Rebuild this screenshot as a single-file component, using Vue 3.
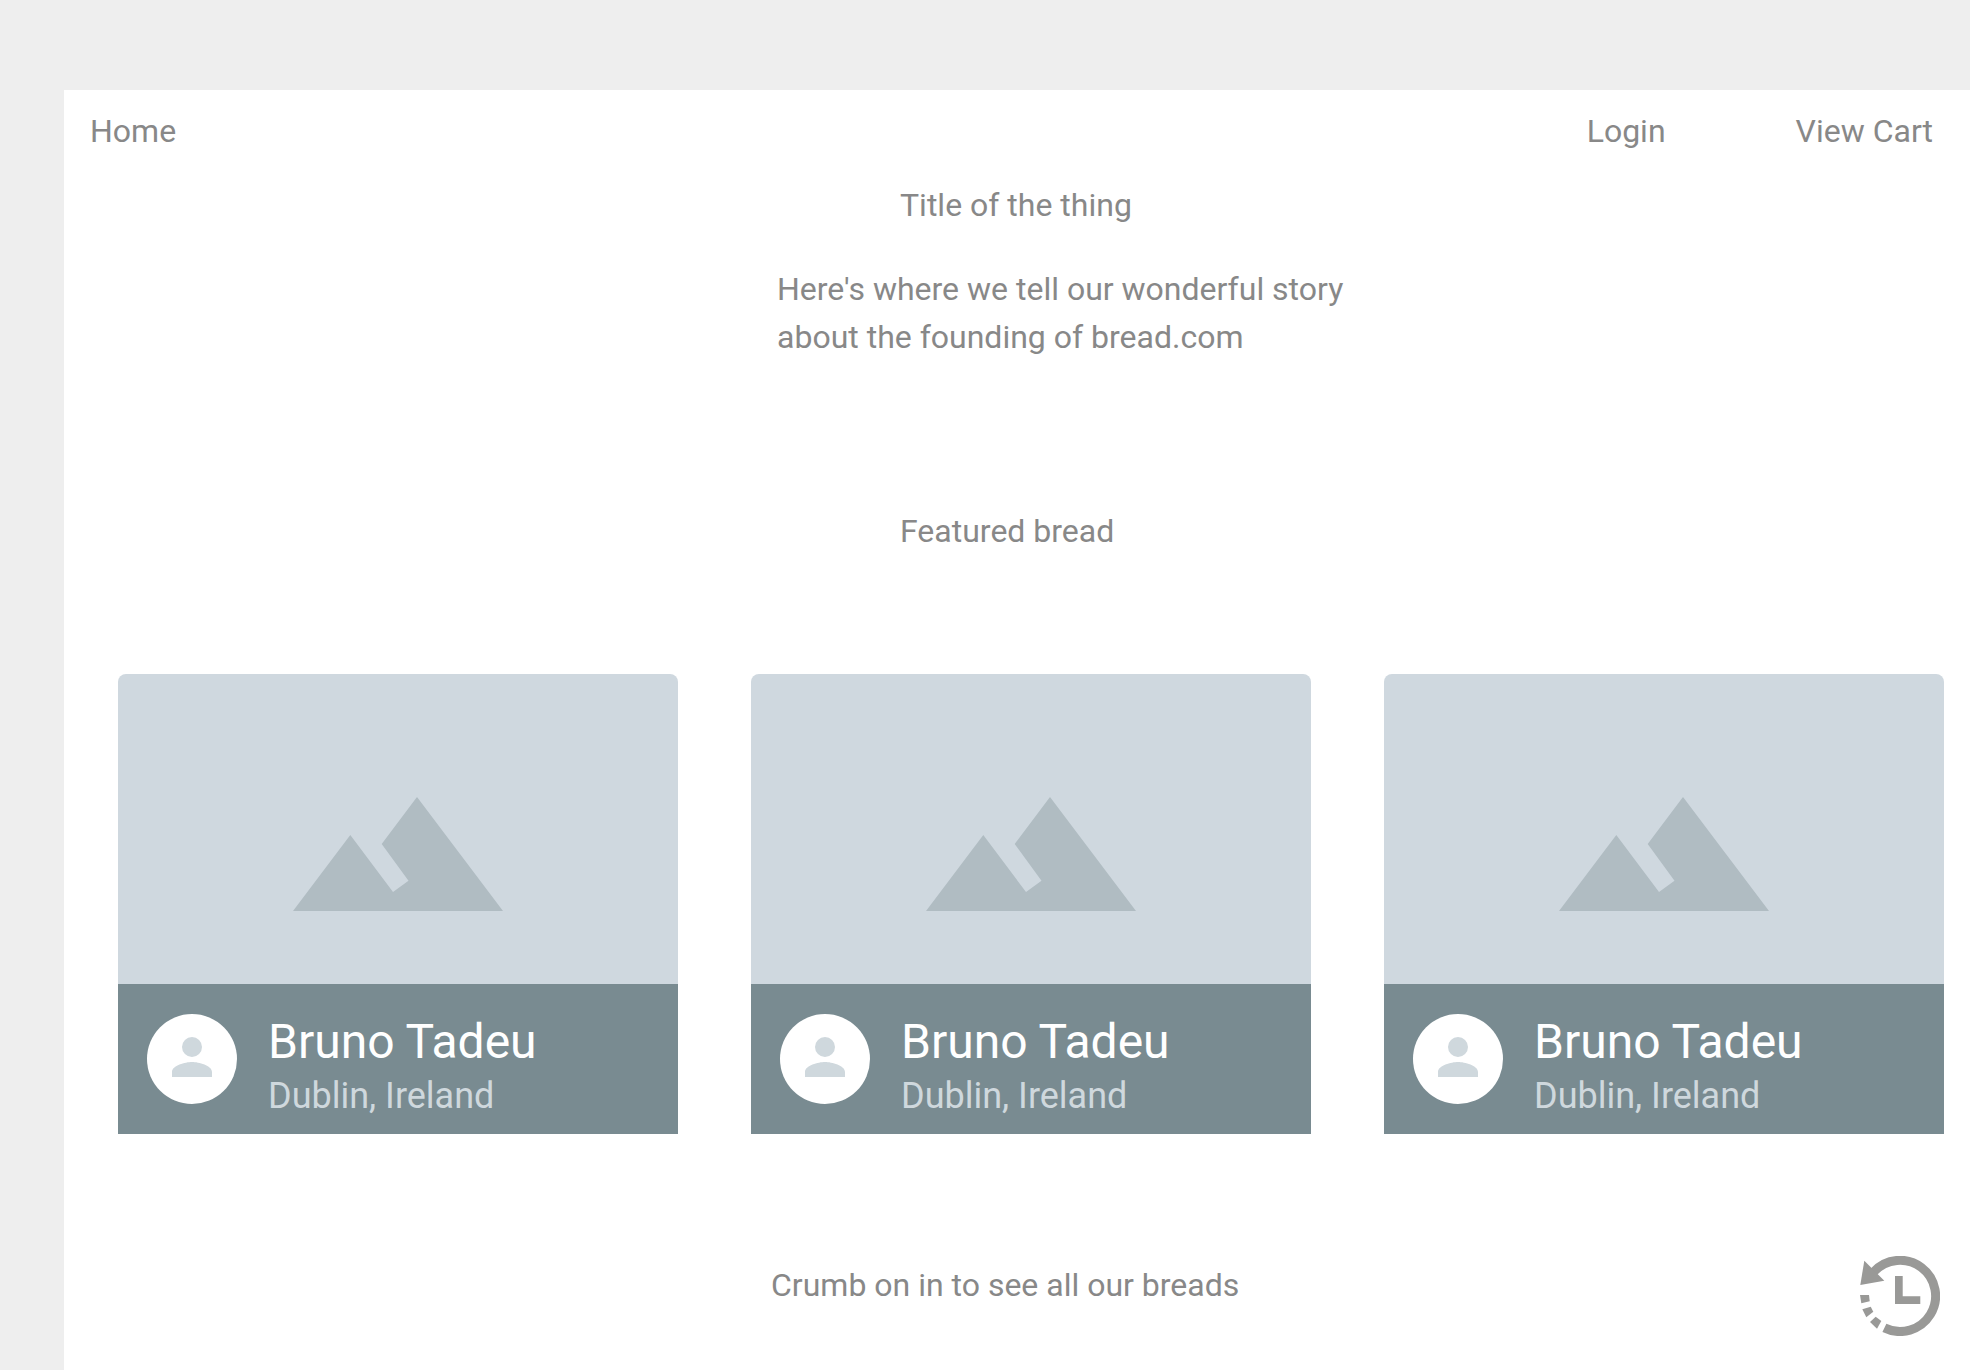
<script setup>
const cards = [
  { id: 1, name: 'Bruno Tadeu', place: 'Dublin, Ireland' },
  { id: 2, name: 'Bruno Tadeu', place: 'Dublin, Ireland' },
  { id: 3, name: 'Bruno Tadeu', place: 'Dublin, Ireland' },
]
</script>

<template>
  <div class="canvas">
    <div class="page">
      <nav class="nav" aria-label="Main">
        <a class="home" href="#">Home</a>
        <a href="#login">Login</a>
        <a href="#cart">View Cart</a>
      </nav>

      <main>
        <h1 class="title">Title of the thing</h1>
        <p class="story">Here's where we tell our wonderful story about the founding of bread.com</p>

        <h2 class="featured">Featured bread</h2>
        <div class="cards">
          <article v-for="card in cards" :key="card.id" class="card">
            <div class="picture">
              <svg class="mountain" viewBox="0 0 210 114" aria-hidden="true">
                <path d="M0 114 57.3 38 100 95 115.5 83.7 88.7 47 124 0 210 114Z" />
              </svg>
            </div>
            <div class="caption">
              <div class="avatar">
                <svg viewBox="0 0 16 16" aria-hidden="true">
                  <path d="M8 8a4 4 0 1 0 0-8 4 4 0 0 0 0 8zm0 2c-2.67 0-8 1.34-8 4v2h16v-2c0-2.66-5.33-4-8-4z" />
                </svg>
              </div>
              <div class="person">
                <h3>{{ card.name }}</h3>
                <p>{{ card.place }}</p>
              </div>
            </div>
          </article>
        </div>

        <p class="more"><a href="#breads">Crumb on in to see all our breads</a></p>
      </main>
    </div>

    <button class="history" type="button" aria-label="History">
      <svg viewBox="0 0 80 80" aria-hidden="true">
        <path class="ring" d="M24.4 71.9A35.6 35.6 0 1 0 13.8 15.8" />
        <path d="M4.3 4.7.3 29 24.3 24.7Z" />
        <path d="M0 39H9L9.7 45.3 1.3 47.3Z" />
        <path d="M2.3 53.3 10.7 50.7 13.3 55.7 6.3 61.3Z" />
        <path d="M10 66 15.7 60.7 21.3 65 17 72.7Z" />
        <path d="M35 20H42.7V40.3H60.3V48H35Z" />
      </svg>
    </button>
  </div>
</template>

<style>
body {
  margin: 0;
  background: #eee;
}
</style>

<style scoped>
.canvas {
  box-sizing: border-box;
  display: flex;
  min-height: 100vh;
  padding: 90px 0 0 64px;
  font-family: Roboto, 'Liberation Sans', sans-serif;
  font-size: 32px;
  line-height: 48px;
  color: #888;
}

.page {
  flex: 1;
  min-width: 0;
  background: #fff;
}

h1,
h2,
h3,
p {
  margin: 0;
  font-size: inherit;
  font-weight: 400;
}

a {
  color: inherit;
  text-decoration: none;
}

.nav {
  display: flex;
  gap: 130px;
  padding: 17px 37px 0 26px;
}

.home {
  margin-right: auto;
}

.title {
  margin: 26px 0 0 calc(50% - 117px);
}

.story {
  max-width: 600px;
  margin: 36px 0 0 calc(50% - 240px);
}

.featured {
  margin: 146px 0 0 calc(50% - 117px);
}

.cards {
  display: grid;
  grid-template-columns: repeat(3, 1fr);
  gap: 73px;
  margin: 119px 26px 0 54px;
}

.card {
  overflow: hidden;
  border-radius: 8px 8px 0 0;
}

.picture {
  display: flex;
  justify-content: center;
  padding: 123px 0 73px;
  background: #cfd8df;
}

.mountain {
  width: 210px;
  height: 114px;
  fill: #b0bcc2;
}

.caption {
  display: flex;
  gap: 31px;
  box-sizing: border-box;
  height: 150px;
  padding: 30px 29px 0;
  background: #798b91;
}

.avatar {
  display: flex;
  flex: none;
  align-items: center;
  justify-content: center;
  box-sizing: border-box;
  width: 90px;
  height: 90px;
  padding-bottom: 4px;
  border-radius: 50%;
  background: #fff;
}

.avatar svg {
  width: 40px;
  height: 40px;
  fill: #cfd8dd;
}

.person h3 {
  font-size: 48px;
  line-height: 56px;
  color: #fff;
}

.person p {
  font-size: 36px;
  line-height: 52px;
  color: #cfd8dd;
}

.more {
  margin: 127px 0 0 calc(50% - 246px);
}

.history {
  position: fixed;
  right: 30px;
  bottom: 34px;
  width: 80px;
  height: 80px;
  padding: 0;
  border: 0;
  background: none;
  cursor: pointer;
}

.history svg {
  display: block;
  width: 80px;
  height: 80px;
  fill: #999997;
}

.history .ring {
  fill: none;
  stroke: #999997;
  stroke-width: 9;
}
</style>
